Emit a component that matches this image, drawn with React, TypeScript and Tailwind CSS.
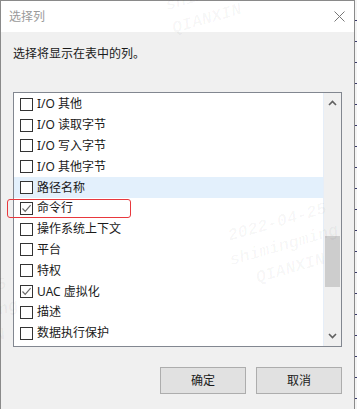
import React from 'react';

const items: { label: string; checked?: boolean; hot?: boolean }[] = [
  { label: 'I/O 其他' },
  { label: 'I/O 读取字节' },
  { label: 'I/O 写入字节' },
  { label: 'I/O 其他字节' },
  { label: '路径名称', hot: true },
  { label: '命令行', checked: true },
  { label: '操作系统上下文' },
  { label: '平台' },
  { label: '特权' },
  { label: 'UAC 虚拟化', checked: true },
  { label: '描述' },
  { label: '数据执行保护' },
];

const Watermark: React.FC<{ lines: string[]; className: string }> = ({ lines, className }) => (
  <div
    className={`pointer-events-none absolute flex -rotate-[16deg] flex-col items-center text-[17px] font-bold italic leading-[24px] text-black/[0.035] ${className}`}
    style={{ fontFamily: '"Liberation Mono", monospace' }}
  >
    {lines.map((l) => (
      <span key={l} className="whitespace-nowrap">{l}</span>
    ))}
  </div>
);

const App: React.FC = () => {
  return (
    <div
      className="relative flex h-[409px] w-[357px] overflow-hidden bg-[#dcdcdc] text-[12px] text-[#1a1a1a]"
      style={{ fontFamily: '"Noto Sans", "Noto Sans CJK SC", sans-serif' }}
    >
      <div className="flex h-[420px] w-[355px] flex-col border border-[#8a8a8a] bg-[#f0f0f0]">
        {/* title bar */}
        <div className="flex h-[31px] items-center justify-between bg-white pl-[8px] pr-[9px]">
          <span className="text-[12px] text-[#9a9a9a]">选择列</span>
          <svg width="11" height="11" viewBox="0 0 11 11" className="mt-[-1px]">
            <path d="M0.5 0.5 L10.5 10.5 M10.5 0.5 L0.5 10.5" stroke="#777" strokeWidth="1" />
          </svg>
        </div>

        <div className="flex flex-col px-[12px]">
          <p className="mt-[14px] leading-[16px]">选择将显示在表中的列。</p>

          {/* list */}
          <div className="mt-[30px] flex h-[255px] w-[329px] border border-[#828790] bg-white">
            <div className="flex flex-1 flex-col pt-[1px]">
              {items.map((it) => (
                <div
                  key={it.label}
                  className={`flex h-[20.8px] items-center gap-[4px] pl-[6px] ${it.hot ? 'bg-[#e3f0fc]' : ''}`}
                >
                  <span className="flex h-[13px] w-[13px] shrink-0 items-center justify-center border border-[#333] bg-white">
                    {it.checked && (
                      <svg width="11" height="11" viewBox="0 0 11 11">
                        <path d="M1.5 5.5 L4.2 8.3 L9.6 2.2" fill="none" stroke="#6a6a6a" strokeWidth="1.2" />
                      </svg>
                    )}
                  </span>
                  <span className="leading-none">{it.label}</span>
                </div>
              ))}
            </div>

            {/* scrollbar */}
            <div className="flex w-[18px] flex-col border-l border-[#e6eef8] bg-[#f0f0f0]">
              <div className="flex h-[20px] items-center justify-center">
                <svg width="9" height="6" viewBox="0 0 9 6">
                  <path d="M1 5 L4.5 1.5 L8 5" fill="none" stroke="#606060" strokeWidth="1.6" />
                </svg>
              </div>
              <div className="mx-[1px] mt-[123px] h-[51px] bg-[#cdcdcd]" />
              <div className="flex-1" />
              <div className="flex h-[20px] items-center justify-center">
                <svg width="9" height="6" viewBox="0 0 9 6">
                  <path d="M1 1 L4.5 4.5 L8 1" fill="none" stroke="#606060" strokeWidth="1.6" />
                </svg>
              </div>
            </div>
          </div>

          {/* buttons */}
          <div className="mt-[20px] flex w-[329px] justify-end gap-[10px]">
            <button className="h-[27px] w-[86px] border border-[#adadad] bg-[#e1e1e1] text-[12px]">确定</button>
            <button className="h-[27px] w-[86px] border border-[#adadad] bg-[#e1e1e1] text-[12px]">取消</button>
          </div>
        </div>
      </div>

      {/* stripe of the window behind */}
      <div className="flex-1 bg-[repeating-linear-gradient(180deg,#f4f4f4_0px,#f4f4f4_20px,#3a3a6a_20px,#3a3a6a_21px)]" />

      {/* annotation box */}
      <div className="pointer-events-none absolute left-[7px] top-[199px] h-[19px] w-[124px] rounded-[3px] border border-[#e8383d]" />

      <Watermark lines={['shiming', 'QIANXIN']} className="left-[168px] top-[-16px]" />
      <Watermark lines={['2022-04-25', 'shimingming', 'QIANXIN']} className="left-[228px] top-[210px]" />
      <Watermark lines={['2022-04-25', 'shimingming', 'QIANXIN']} className="left-[-92px] top-[285px]" />
    </div>
  );
};

export default App;
